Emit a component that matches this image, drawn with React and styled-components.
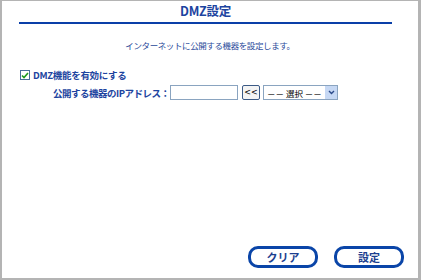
import React from 'react'
import styled, { createGlobalStyle } from 'styled-components'

const Global = createGlobalStyle`
  html, body { margin: 0; padding: 0; background: #fff; }
  body { font-family: "Noto Sans CJK JP", "Noto Sans", sans-serif; }
`

const Frame = styled.div`
  width: 421px;
  height: 280px;
  box-sizing: border-box;
  border-style: solid;
  border-color: #b4b4b4;
  border-width: 1px 3px 2px 2px;
  display: flex;
  flex-direction: column;
`

const Title = styled.h1`
  margin: 0 26px 0 17px;
  height: 21px;
  border-bottom: 2px solid #0a3fa8;
  text-align: center;
  font-size: 12.5px;
  letter-spacing: -0.3px;
  line-height: 20px;
  font-weight: bold;
  color: #1d44a0;
`

const Lead = styled.p`
  margin: 14px 0 0;
  text-align: center;
  font-size: 8.5px;
  letter-spacing: -0.4px;
  line-height: 14px;
  color: #2a4a9a;
`

const Form = styled.div`
  margin: 16px 0 0 18px;
  display: flex;
  flex-direction: column;
  gap: 3px;
`

const CheckRow = styled.label`
  display: flex;
  align-items: center;
  gap: 3px;
  font-size: 9.5px;
  letter-spacing: -0.3px;
  font-weight: bold;
  color: #1d44a0;
`

const Box = styled.span`
  width: 8px;
  height: 8px;
  border: 1px solid #4a6f9c;
  background: #fff;
  display: flex;
  align-items: center;
  justify-content: center;
`

const FieldRow = styled.div`
  display: flex;
  align-items: center;
  padding-left: 33px;
  font-size: 9.5px;
  letter-spacing: -0.5px;
  font-weight: bold;
  color: #1d44a0;
  white-space: nowrap;
`

const Label = styled.span`
  width: 117px;
`

const TextInput = styled.input`
  width: 68px;
  height: 15px;
  box-sizing: border-box;
  border: 1px solid #8aa4c0;
  margin: 0 4px 0 0;
  padding: 0;
`

const SmallButton = styled.button`
  width: 18px;
  height: 15px;
  box-sizing: border-box;
  border: 1px solid #3c5a86;
  border-radius: 2px;
  background: #f4f4f4;
  font-family: "DejaVu Sans", sans-serif;
  font-size: 8px;
  letter-spacing: 0;
  color: #000;
  padding: 0;
  margin-right: 3px;
`

const Select = styled.div`
  width: 75px;
  height: 15px;
  box-sizing: border-box;
  border: 1px solid #8aa4c0;
  display: flex;
  align-items: center;
  font-size: 8.5px;
  letter-spacing: 0;
  font-weight: normal;
  color: #000;
`

const SelectText = styled.span`
  flex: 1;
  padding-left: 3px;
  white-space: pre;
`

const Arrow = styled.span`
  width: 12px;
  height: 13px;
  background: #c6d8f4;
  display: flex;
  align-items: center;
  justify-content: center;
`

const Spacer = styled.div`
  flex: 1;
`

const Actions = styled.div`
  display: flex;
  justify-content: flex-end;
  gap: 16px;
  padding: 0 14px 10px 0;
`

const ActionButton = styled.button`
  width: 70px;
  height: 22px;
  box-sizing: border-box;
  border: 3px solid #0a45a8;
  border-radius: 10px;
  background: #fff;
  font-family: "Noto Sans CJK JP", sans-serif;
  font-size: 11px;
  font-weight: bold;
  color: #1d3f8f;
  padding: 0;
`

export default function App() {
  return (
    <>
      <Global />
      <Frame>
        <Title>DMZ設定</Title>
        <Lead>インターネットに公開する機器を設定します。</Lead>
        <Form>
          <CheckRow>
            <Box>
              <svg width="8" height="7" viewBox="0 0 8 7">
                <path d="M1 3.5 L3 5.5 L7 1" fill="none" stroke="#1d9a1d" strokeWidth="1.6" />
              </svg>
            </Box>
            DMZ機能を有効にする
          </CheckRow>
          <FieldRow>
            <Label>公開する機器のIPアドレス：</Label>
            <TextInput type="text" />
            <SmallButton>&lt;&lt;</SmallButton>
            <Select>
              <SelectText>－－ 選択 －－</SelectText>
              <Arrow>
                <svg width="7" height="5" viewBox="0 0 7 5">
                  <path d="M1 1 L3.5 3.5 L6 1" fill="none" stroke="#2b4a8a" strokeWidth="1.4" />
                </svg>
              </Arrow>
            </Select>
          </FieldRow>
        </Form>
        <Spacer />
        <Actions>
          <ActionButton>クリア</ActionButton>
          <ActionButton>設定</ActionButton>
        </Actions>
      </Frame>
    </>
  )
}
